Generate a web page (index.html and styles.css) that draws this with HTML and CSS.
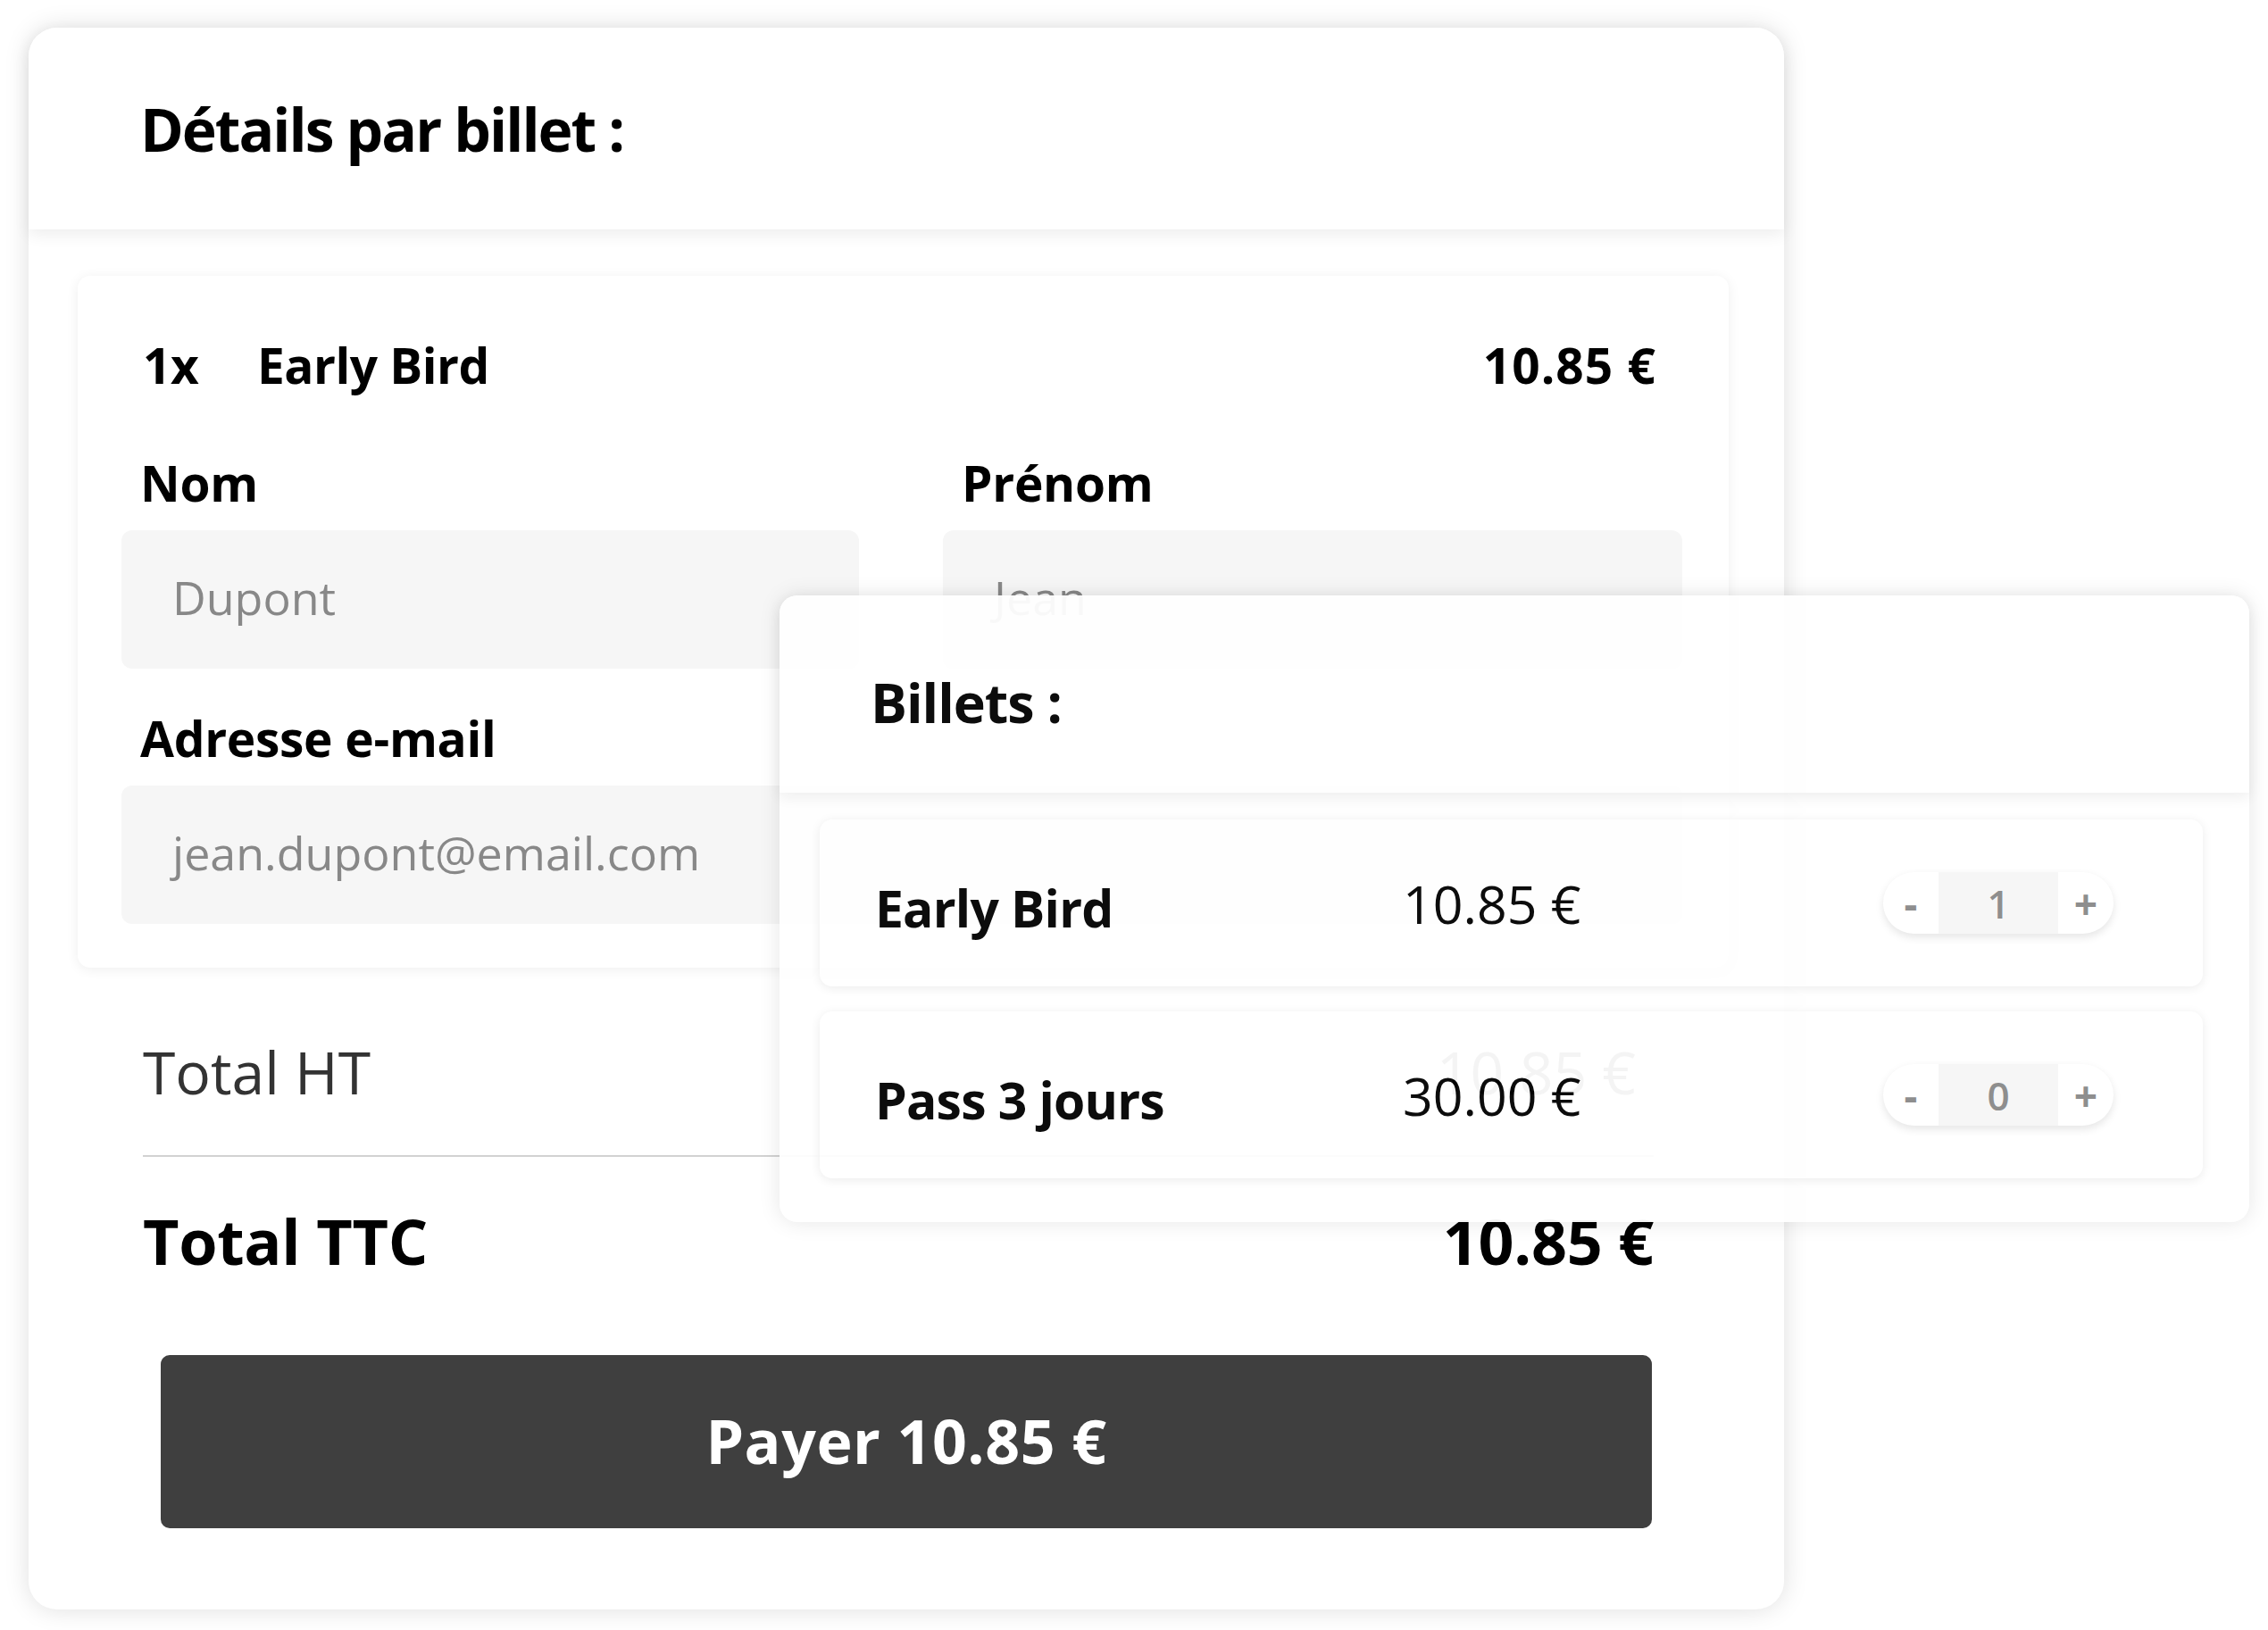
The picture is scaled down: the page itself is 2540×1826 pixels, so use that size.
FILE: index.html
```html
<!DOCTYPE html>
<html lang="fr">
<head>
<meta charset="utf-8">
<title>Détails par billet</title>
<link rel="stylesheet" href="styles.css">
</head>
<body>
<div class="stage">
  <section class="checkout">
    <header class="checkout-head">
      <h1 class="title">Détails par billet :</h1>
    </header>
    <div class="checkout-body">
      <div class="ticket-card">
        <div class="ticket-line">
          <span class="qty">1x</span>
          <span class="ticket-name">Early Bird</span>
          <span class="ticket-price">10.85 €</span>
        </div>
        <div class="fields">
          <div class="field">
            <div class="field-label">Nom</div>
            <div class="field-input">Dupont</div>
          </div>
          <div class="field">
            <div class="field-label">Prénom</div>
            <div class="field-input">Jean</div>
          </div>
          <div class="field field-wide">
            <div class="field-label field-label-spaced">Adresse e-mail</div>
            <div class="field-input">jean.dupont@email.com</div>
          </div>
        </div>
      </div>
      <div class="totals">
        <div class="total-row total-ht">
          <span>Total HT</span>
          <span class="total-ht-value">10.85 €</span>
        </div>
        <div class="divider"></div>
        <div class="total-row total-ttc">
          <span>Total TTC</span>
          <span>10.85 €</span>
        </div>
        <button class="pay">Payer 10.85 €</button>
      </div>
    </div>
  </section>

  <section class="tickets">
    <header class="tickets-head">
      <h2 class="title title-small">Billets :</h2>
    </header>
    <div class="tickets-list">
      <div class="ticket-row">
        <span class="row-name">Early Bird</span>
        <span class="row-price">10.85 €</span>
        <div class="stepper">
          <span class="step-btn">-</span>
          <span class="step-val">1</span>
          <span class="step-btn">+</span>
        </div>
      </div>
      <div class="ticket-row">
        <span class="row-name">Pass 3 jours</span>
        <span class="row-price">30.00 €</span>
        <div class="stepper">
          <span class="step-btn">-</span>
          <span class="step-val">0</span>
          <span class="step-btn">+</span>
        </div>
      </div>
    </div>
  </section>
</div>
</body>
</html>
```

FILE: styles.css
```css
* { box-sizing: border-box; }

html, body {
  margin: 0;
  padding: 0;
  background: #ffffff;
}

body {
  font-family: "Open Sans", "Noto Sans", "Liberation Sans", sans-serif;
  color: #000;
}

.stage {
  position: relative;
  width: 2540px;
  height: 1826px;
  padding: 31px 0 0 32px;
}

.title {
  margin: 0;
  font-size: 66px;
  font-weight: 700;
  letter-spacing: -2px;
  line-height: 1;
}

.title-small {
  font-size: 61px;
  letter-spacing: -1px;
}

/* main card */
.checkout {
  width: 1966px;
  height: 1772px;
  background: #fff;
  border-radius: 32px;
  box-shadow: 0 0 28px rgba(0, 0, 0, 0.13);
  display: flex;
  flex-direction: column;
}

.checkout-head {
  position: relative;
  z-index: 1;
  height: 226px;
  display: flex;
  align-items: center;
  padding-left: 125px;
  background: #fff;
  border-radius: 32px 32px 0 0;
  box-shadow: 0 6px 18px rgba(0, 0, 0, 0.07);
}

.checkout-body {
  padding: 52px 62px 0 55px;
}

.ticket-card {
  height: 775px;
  background: #fff;
  border-radius: 14px;
  box-shadow: 0 2px 14px rgba(0, 0, 0, 0.07);
  padding: 0 52px 0 49px;
}

.ticket-line {
  height: 198px;
  display: flex;
  align-items: center;
  padding: 0 29px 0 24px;
  font-size: 55px;
  font-weight: 700;
  letter-spacing: -0.5px;
}

.qty { width: 128px; }
.ticket-name { flex: 1; }
.ticket-price { letter-spacing: 1px; }

.fields {
  display: grid;
  grid-template-columns: 826px 828px;
  column-gap: 94px;
}

.field-wide { grid-column: 1 / 3; }

.field-label {
  height: 68px;
  line-height: 68px;
  margin-bottom: 19px;
  padding-left: 21px;
  font-size: 55px;
  font-weight: 700;
  letter-spacing: -0.3px;
}

.field-label-spaced { margin-top: 44px; }

.field-input {
  height: 155px;
  display: flex;
  align-items: center;
  padding: 0 0 6px 57px;
  background: #f6f6f6;
  border-radius: 12px;
  color: #888;
  font-size: 52px;
  font-weight: 400;
}

/* totals */
.totals {
  padding: 0 84px 0 73px;
}

.total-row {
  display: flex;
  justify-content: space-between;
  align-items: center;
}

.total-ht {
  margin-top: 73px;
  height: 90px;
  padding-bottom: 4px;
  font-size: 66px;
  font-weight: 400;
  color: #333;
}

.total-ht-value { margin-right: 20px; }

.divider {
  margin-top: 47px;
  height: 2px;
  background: #d2d2d2;
}

.total-ttc {
  margin-top: 44px;
  height: 100px;
  font-size: 70px;
  font-weight: 700;
  letter-spacing: -0.3px;
}

.pay {
  display: block;
  margin: 78px 0 0 20px;
  width: 1670px;
  height: 194px;
  padding-bottom: 4px;
  border: none;
  border-radius: 10px;
  background: #3f3f3f;
  color: #fff;
  font-family: inherit;
  font-size: 68px;
  font-weight: 700;
  letter-spacing: 0.5px;
}

/* overlay card */
.tickets {
  position: absolute;
  left: 873px;
  top: 667px;
  width: 1646px;
  height: 702px;
  background: #fff;
  border-radius: 20px;
  box-shadow: 0 0 24px rgba(0, 0, 0, 0.10);
  opacity: 0.95;
  display: flex;
  flex-direction: column;
}

.tickets-head {
  position: relative;
  z-index: 1;
  height: 221px;
  display: flex;
  align-items: center;
  padding: 18px 0 0 102px;
  background: #fff;
  border-radius: 20px 20px 0 0;
  box-shadow: 0 5px 16px rgba(0, 0, 0, 0.07);
}

.tickets-list {
  padding: 30px 52px 0 45px;
  display: flex;
  flex-direction: column;
  gap: 28px;
}

.ticket-row {
  height: 187px;
  display: flex;
  align-items: center;
  padding: 0 100px 0 62px;
  background: #fff;
  border-radius: 14px;
  box-shadow: 0 2px 12px rgba(0, 0, 0, 0.08);
}

.row-name {
  width: 591px;
  padding-top: 10px;
  font-size: 57px;
  font-weight: 700;
  letter-spacing: -0.8px;
}

.row-price {
  flex: 1;
  font-size: 59px;
  font-weight: 400;
}

.stepper {
  display: flex;
  height: 69px;
  border-radius: 35px;
  background: #fff;
  box-shadow: 0 4px 10px rgba(0, 0, 0, 0.10);
  overflow: hidden;
  color: #888;
  font-weight: 600;
}

.step-btn {
  width: 62px;
  display: flex;
  align-items: center;
  justify-content: center;
  font-size: 46px;
  font-weight: 700;
}

.step-val {
  width: 134px;
  display: flex;
  align-items: center;
  justify-content: center;
  background: #f6f6f6;
  font-size: 44px;
}
```
